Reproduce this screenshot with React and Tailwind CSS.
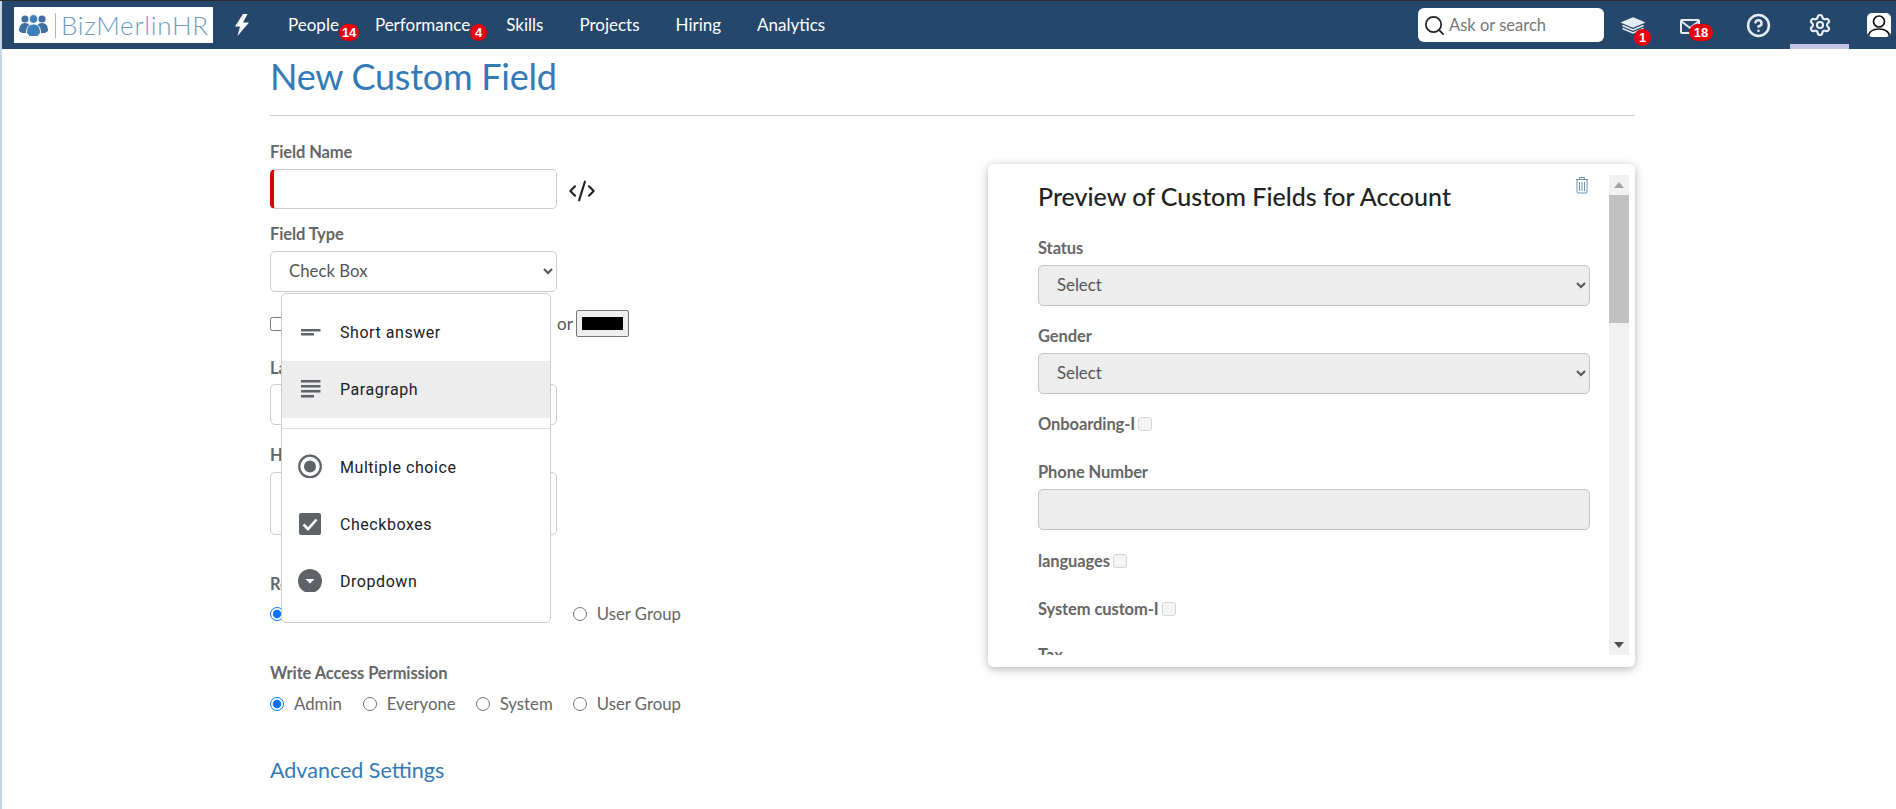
import { CircleHelp, Settings, Search, CodeXml } from 'lucide-react';

const navLinks = [
  { label: 'People', badge: '14' },
  { label: 'Performance', badge: '4' },
  { label: 'Skills' },
  { label: 'Projects' },
  { label: 'Hiring' },
  { label: 'Analytics' },
];

const Badge = ({ children, className }) => (
  <span className={`absolute flex h-[17px] min-w-[17px] items-center justify-center rounded-full bg-[#e8000d] px-[3px] font-['Liberation_Sans',sans-serif] text-[13px] font-bold leading-none text-white ${className}`}>
    {children}
  </span>
);

const Logo = () => (
  <div className="flex h-9 w-[199px] items-center bg-white pl-[5px]">
    <svg width="29" height="24" viewBox="0 0 29 24">
      <g fill="#3f6f9e">
        <circle cx="6" cy="6" r="3.6" />
        <circle cx="23" cy="6" r="3.6" />
        <path d="M0 18c0-5 2-8 6-8s6 3 6 8l-3 2H3z" />
        <path d="M17 18c0-5 2-8 6-8s6 3 6 8l-3 2h-6z" />
      </g>
      <g fill="#3b7fbd" stroke="#fff" strokeWidth="1">
        <circle cx="14.5" cy="6" r="4.4" />
        <path d="M7.5 20c0-6 2.500-9 7-9s7 3 7 9l-3 3.500h-8z" />
      </g>
    </svg>
    <span className="ml-[7px] h-[25px] w-px bg-[#9dbbd8]" />
    <span className="ml-[5px] font-['Lato',sans-serif] text-[26px] font-light leading-none tracking-[0.7px] text-[#6f9cc4]">BizMerlinHR</span>
  </div>
);

const TopBar = () => (
  <header className="flex h-12 shrink-0 items-center bg-[#24476b] font-['Lato',sans-serif]">
    <div className="ml-3">
      <Logo />
    </div>
    <svg className="ml-5" width="18" height="22" viewBox="0 0 18 22" fill="#fff">
      <path d="M10 0 2 12.500h5L4.500 22 16 8.500h-6L14.500 0zM10.400 1.400 7.700 9.500h5.800l-6.900 8 1.700-6H3.800z" fillRule="evenodd" />
      <path d="M10 1 3.500 12h4.300L6 19l8.500-10H9z" />
    </svg>
    <nav className="ml-[37px] flex items-center gap-9">
      {navLinks.map((link) => (
        <a key={link.label} className="relative text-[17px] leading-6 text-white">
          {link.label}
          {link.badge && <Badge className="left-full top-[11px]">{link.badge}</Badge>}
        </a>
      ))}
    </nav>
    <div className="ml-auto flex h-full items-center">
      <div className="flex h-[34px] w-[186px] items-center rounded-md bg-white pl-[5px] text-[16.5px] text-[#777]">
        <Search size={23} strokeWidth={1.8} className="text-[#222]" />
        <span className="ml-[3px]">Ask or search</span>
      </div>
      <div className="relative flex h-full w-[58px] items-center justify-center">
        {/* stacked layers, filled top sheet */}
        <svg className="mt-px" width="24" height="17" viewBox="0 0 24 17" fill="none" stroke="#e6ecf3" strokeWidth="1.600">
          <path d="M12 1 22.500 5.500 12 10 1.500 5.500z" fill="#e6ecf3" />
          <path d="M1.500 8.500 12 13l10.500-4.500M1.500 11.500 12 16l10.500-4.500" />
        </svg>
        <Badge className="left-[30px] top-[28px]">1</Badge>
      </div>
      <div className="relative flex h-full w-[56px] items-center justify-center">
        <svg className="mt-[3px]" width="20" height="15" viewBox="0 0 20 15" fill="none" stroke="#e6ecf3" strokeWidth="2">
          <rect x="1" y="1" width="18" height="13" rx="1" />
          <path d="M1 2l9 7 9-7" />
        </svg>
        <Badge className="left-[27px] top-[23px] w-6">18</Badge>
      </div>
      <div className="ml-[10px] flex h-full w-[60px] items-center justify-center">
        <CircleHelp size={25} strokeWidth={2.400} className="text-[#e6ecf3]" />
      </div>
      <div className="ml-[2px] flex h-full w-[59px] items-center justify-center border-b-[5px] border-[#c5c5e8] pt-[5px]">
        <Settings size={24} strokeWidth={2.200} className="text-[#e6ecf3]" />
      </div>
      <div className="flex h-full w-[47px] items-center pl-[18px]">
        <div className="flex h-6 w-6 items-center justify-center overflow-hidden rounded-[5px] bg-white">
          <svg width="24" height="24" viewBox="0 0 24 24" fill="none" stroke="#111" strokeWidth="1.700">
            <circle cx="12" cy="8.500" r="5.500" />
            <path d="M1.500 24c0-5 4-8 10.500-8s10.500 3 10.500 8" />
          </svg>
        </div>
      </div>
    </div>
  </header>
);

const FieldLabel = ({ children, className = '' }) => (
  <div className={`h-6 text-[16.5px] font-bold leading-6 tracking-[-0.1px] text-[#666] ${className}`}>{children}</div>
);

// compact pulls System in a little, the read row sits behind the type menu
const PermissionRow = ({ compact }) => (
  <div className="flex h-5 items-center text-[16.8px] leading-5 text-[#666]">
    <input type="radio" defaultChecked className="m-0 h-[14px] w-[14px]" />
    <span className="ml-[10px]">Admin</span>
    <input type="radio" className="m-0 ml-[21px] h-[14px] w-[14px]" />
    <span className="ml-[10px]">Everyone</span>
    <input type="radio" className={`m-0 h-[14px] w-[14px] ${compact ? 'ml-4' : 'ml-5'}`} />
    <span className="ml-[10px]">System</span>
    <input type="radio" className={`m-0 h-[14px] w-[14px] ${compact ? 'ml-6' : 'ml-5'}`} />
    <span className="ml-[10px]">User Group</span>
  </div>
);

const MenuRow = ({ icon, label, active }) => (
  <div className={`flex h-[57px] items-center ${active ? 'bg-[#ededed]' : ''}`}>
    <div className="mt-[15px] w-14 self-start pl-4">{icon}</div>
    <span className="ml-[2px] font-['Roboto',sans-serif] text-base tracking-[0.55px] text-[#202124]">{label}</span>
  </div>
);

const TypeMenu = () => (
  <div className="absolute left-[11px] top-[177px] w-[270px] rounded-[5px] border border-[#ccccd2] bg-white pb-3 pt-[10px]">
    <MenuRow
      label="Short answer"
      icon={
        <svg className="block" width="24" height="24" viewBox="0 0 24 24" fill="#5f6368">
          <path d="M3 10h19.500v2.500H3zM3 14h13v2.500H3z" />
        </svg>
      }
    />
    <MenuRow
      active
      label="Paragraph"
      icon={
        <svg className="block" width="24" height="24" viewBox="0 0 24 24" fill="#5f6368">
          <path d="M3 4h19.500v2.500H3zM3 9h19.500v2.500H3zM3 14h19.500v2.500H3zM3 19h13v2.500H3z" />
        </svg>
      }
    />
    <div className="mt-[10px] border-t border-[#d9d9de] pt-[10px]">
      <MenuRow
        label="Multiple choice"
        icon={
          <svg className="block" width="24" height="24" viewBox="0 0 24 24">
            <circle cx="12" cy="12.500" r="10.800" fill="none" stroke="#5f6368" strokeWidth="2.200" />
            <circle cx="12" cy="12.500" r="6" fill="#5f6368" />
          </svg>
        }
      />
      <MenuRow
        label="Checkboxes"
        icon={
          <svg className="block" width="24" height="24" viewBox="0 0 24 24">
            <rect x="1" y="2" width="22" height="22" rx="2" fill="#5f6368" />
            <path d="M5.500 13.500 10 18l8.500-9.500" fill="none" stroke="#fff" strokeWidth="2.600" />
          </svg>
        }
      />
      <MenuRow
        label="Dropdown"
        icon={
          <svg className="block" width="24" height="24" viewBox="0 0 24 24">
            <circle cx="12" cy="13" r="12" fill="#5f6368" />
            <path d="M7.500 11h9L12 15.500z" fill="#fff" />
          </svg>
        }
      />
    </div>
  </div>
);

const LeftForm = () => (
  <div className="relative w-[718px] pt-6">
    <FieldLabel className="mb-[5px]">Field Name</FieldLabel>
    <div className="flex items-center">
      <input className="h-10 w-[287px] rounded-[5px] border border-[#ccc] border-l-4 border-l-[#d90000] bg-white" />
      <CodeXml size={28} strokeWidth={1.800} className="ml-[11px] mt-[3px] text-[#222]" />
    </div>
    <FieldLabel className="mb-[5px] mt-[13px]">Field Type</FieldLabel>
    <select className="block h-[41px] w-[287px] rounded-[5px] border border-[#ccc] bg-white pb-[2px] pl-[14px] text-[16.8px] text-[#555]">
      <option>Check Box</option>
    </select>
    <div className="mt-[18px] flex h-7 items-center">
      <input type="checkbox" className="m-0 h-[14px] w-[14px]" />
      <span className="ml-[273px] text-[17px] text-[#555]">or</span>
      <div className="ml-[3px] -mt-px flex h-[27px] w-[53px] items-center justify-center rounded-[2px] border border-[#767676] bg-[#efefef]">
        <div className="h-[13px] w-[41px] bg-black" />
      </div>
    </div>
    <FieldLabel className="mb-1 mt-[18px]">Label</FieldLabel>
    <input className="block h-[41px] w-[287px] rounded-[5px] border border-[#ccc]" />
    <FieldLabel className="mb-[5px] mt-[18px]">Help Text</FieldLabel>
    <textarea className="block h-[63px] w-[287px] resize-none rounded-[5px] border border-[#ccc]" />
    <FieldLabel className="mb-2 mt-[37px]">Read Access Permission</FieldLabel>
    <PermissionRow compact />
    <FieldLabel className="mb-[9px] mt-[37px]">Write Access Permission</FieldLabel>
    <PermissionRow />
    <a className="mt-[42px] block text-[21.5px] leading-7 text-[#337ab7]">Advanced Settings</a>
    <TypeMenu />
  </div>
);

const PreviewSelect = () => (
  <select disabled className="block h-[41px] w-[552px] rounded-[5px] border border-[#c4c4c4] bg-[#ededed] pb-[2px] pl-[14px] text-[16.8px] text-[#555] opacity-100">
    <option>Select</option>
  </select>
);

const CheckLabel = ({ label, className }) => (
  <div className={`flex h-6 items-start text-[16.5px] font-bold leading-[22px] tracking-[-0.1px] text-[#666] ${className}`}>
    {label}
    <span className="ml-[3px] mt-[4px] h-[14px] w-[14px] rounded-[3px] border border-[#d5d5d5] bg-[#f5f5f5]" />
  </div>
);

const Scrollbar = () => (
  <div className="ml-[19px] flex w-5 shrink-0 flex-col bg-[#f1f1f1]">
    <div className="flex h-5 items-center justify-center">
      <svg width="10" height="6" viewBox="0 0 10 6" fill="#a3a3a3">
        <path d="M5 0l5 6H0z" />
      </svg>
    </div>
    <div className="h-32 bg-[#c1c1c1]" />
    <div className="flex-1" />
    <div className="flex h-5 items-center justify-center">
      <svg width="10" height="6" viewBox="0 0 10 6" fill="#505050">
        <path d="M0 0h10L5 6z" />
      </svg>
    </div>
  </div>
);

const PreviewCard = () => (
  <div className="relative mt-12 flex h-[503px] w-[647px] rounded-md bg-white pb-3 pl-[50px] pt-[11px] shadow-[0_2px_10px_rgba(0,0,0,0.3)]">
    <div className="h-full w-[552px] overflow-hidden">
      <h2 className="mt-[5px] h-8 text-[25px] font-medium leading-8 text-[#222]">Preview of Custom Fields for Account</h2>
      <FieldLabel className="mb-[5px] mt-6">Status</FieldLabel>
      <PreviewSelect />
      <FieldLabel className="mb-[5px] mt-[18px]">Gender</FieldLabel>
      <PreviewSelect />
      <CheckLabel label="Onboarding-I" className="mt-[19px]" />
      <FieldLabel className="mb-[5px] mt-[23px]">Phone Number</FieldLabel>
      <div className="h-[41px] rounded-[5px] border border-[#c4c4c4] bg-[#ededed]" />
      <CheckLabel label="languages" className="mt-5" />
      <CheckLabel label="System custom-I" className="mt-6" />
      <FieldLabel className="mt-[21px]">Tax</FieldLabel>
    </div>
    <Scrollbar />
    <svg className="absolute left-[587px] top-[12px]" width="14" height="18" viewBox="0 0 14 18" fill="none" stroke="#6f93b5" strokeWidth="1">
      <path d="M1 3.500h12M4.500 3.500V1.500h5v2M2 3.500V16a1 1 0 0 0 1 1h8a1 1 0 0 0 1-1V3.500M4.500 6v9M7 6v9M9.500 6v9" />
    </svg>
  </div>
);

const App = () => (
  <div className="h-[809px] w-[1896px] overflow-hidden bg-white font-['Lato',sans-serif]">
    <div className="h-px bg-[#2b2b2b]" />
    <div className="flex h-[808px] flex-col border-l-2 border-[#c6d4e8]">
      <TopBar />
      <main className="ml-[268px] w-[1365px]">
        <h1 className="mb-[11px] mt-px h-[54px] text-4xl font-normal leading-[52px] tracking-[-0.25px] text-[#337ab7]">New Custom Field</h1>
        <hr className="border-[#ccc]" />
        <div className="flex">
          <LeftForm />
          <PreviewCard />
        </div>
      </main>
    </div>
  </div>
);

export default App;
